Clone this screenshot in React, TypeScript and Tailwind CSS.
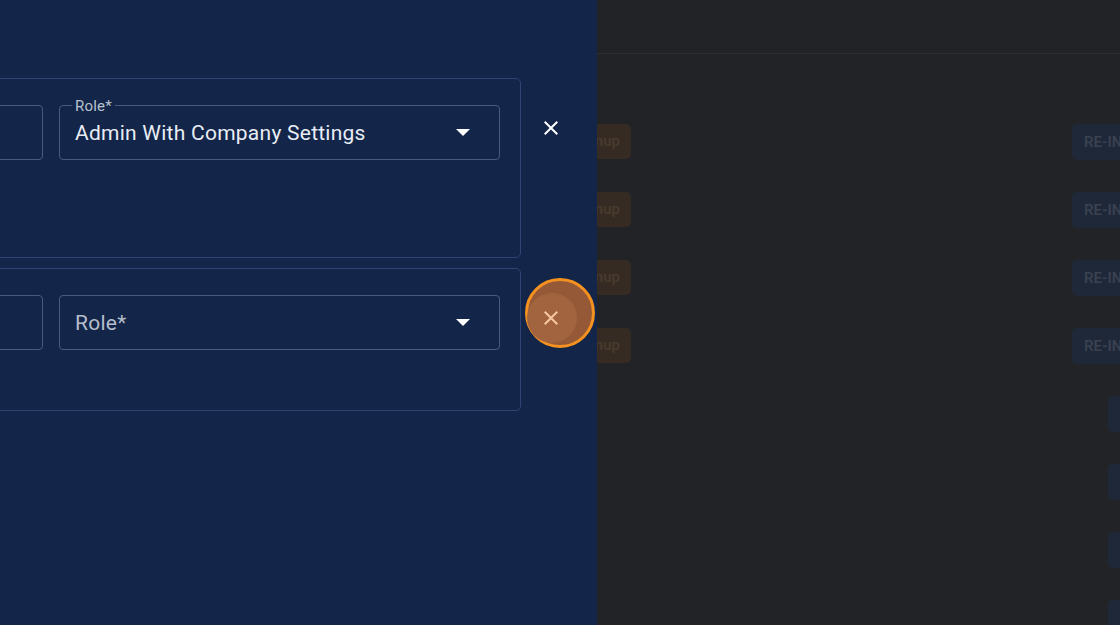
import React from "react";

const CloseIcon = ({ className }: { className?: string }) => (
  <svg viewBox="0 0 24 24" width="24" height="24" className={className} fill="currentColor">
    <path d="M19 6.41L17.59 5 12 10.59 6.41 5 5 6.41 10.59 12 5 17.59 6.41 19 12 13.41 17.59 19 19 17.59 13.41 12z" />
  </svg>
);

const Arrow = () => (
  <svg width="14" height="7" viewBox="0 0 14 7" className="shrink-0">
    <polygon points="0,0 14,0 7,7" fill="#ffffff" />
  </svg>
);

function Field({ label, value }: { label?: string; value?: string }) {
  return (
    <div className="relative w-[441px] h-[55px] rounded-[4px] border border-[#485b7d] flex items-center pl-[15px] pr-[29px]">
      {label && (
        <span className="absolute -top-[8px] left-[12px] px-[3px] bg-[#132549] text-[15px] leading-[16px] text-[#b9c2d0] tracking-[0.2px]">
          {label}
        </span>
      )}
      <span className={value ? "flex-1 pt-[2px] text-[21px] tracking-[0.25px] text-[#e8edf4]" : "flex-1 pt-[2px] text-[21px] tracking-[0.25px] text-[#b4bdcb]"}>
        {value ?? "Role*"}
      </span>
      <Arrow />
    </div>
  );
}

function Card({ height, filled, highlight }: { height: string; filled: boolean; highlight?: boolean }) {
  return (
    <div className="flex items-start">
      <div className={`ml-[-200px] w-[721px] ${height} rounded-[5px] border border-[#2f4571] pt-[26px] pr-[20px] flex gap-4`}>
        <div className="flex-1 h-[55px] rounded-[4px] border border-[#485b7d]" />
        {filled ? <Field label="Role*" value="Admin With Company Settings" /> : <Field />}
      </div>
      <div className="relative ml-[6px] mt-[26px] w-[48px] h-[48px] flex items-center justify-center">
        {highlight && (
          <>
            <div className="absolute left-[-2px] top-[-16px] w-[70px] h-[70px] rounded-full border-[3px] border-[#f5921f] bg-[#955937]" />
            <div className="absolute left-[0px] top-[-1px] w-[50px] h-[50px] rounded-full bg-[#a2643e]" />
          </>
        )}
        <CloseIcon className={highlight ? "relative w-[24px] h-[24px] text-[#f6c6a2]" : "relative w-[24px] h-[24px] text-white"} />
      </div>
    </div>
  );
}

const rows = [0, 1, 2, 3];
const rows2 = [0, 1, 2, 3];

export default function App() {
  return (
    <div className="flex w-[1120px] h-[625px] overflow-hidden" style={{ fontFamily: "Roboto, 'Noto Sans', sans-serif" }}>
      <div className="w-[597px] h-[625px] shrink-0 bg-[#132549] pt-[78px] flex flex-col gap-[10px] overflow-hidden relative z-10">
        <Card height="h-[180px]" filled />
        <Card height="h-[143px]" filled={false} highlight />
      </div>
      <div className="flex-1 h-[625px] bg-[#222327] flex flex-col">
        <div className="h-[54px] border-b border-[#2e2f33] shrink-0" />
        <div className="pt-[70px] flex flex-col">
          {rows.map((i) => (
            <div key={i} className="h-[68px] flex items-start justify-between">
              <div className="ml-[-40px] w-[74px] h-[35px] rounded-[5px] bg-[#352b22] flex items-center justify-end pr-[11px] text-[15px] font-semibold text-[#483a2d]">
                Signup
              </div>
              <div className="mr-[-62px] w-[110px] h-[36px] rounded-[5px] bg-[#1f2839] flex items-center pl-[12px] text-[15px] font-semibold text-[#3a4150] whitespace-nowrap">
                RE-INVITE
              </div>
            </div>
          ))}
          {rows2.map((i) => (
            <div key={`b${i}`} className="h-[68px] flex items-start justify-end">
              <div className="mr-[-24px] w-[36px] h-[36px] rounded-[5px] bg-[#1f2839]" />
            </div>
          ))}
        </div>
      </div>
    </div>
  );
}
